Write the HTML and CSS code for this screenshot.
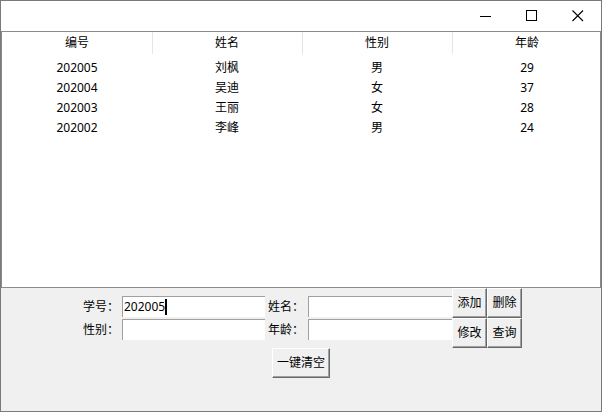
FILE: index.html
```html
<!DOCTYPE html>
<html>
<head>
<meta charset="utf-8">
<link rel="stylesheet" href="styles.css">
</head>
<body>
<div class="window">
  <div class="titlebar">
    <div class="tb-btn"><svg width="12" height="12" viewBox="0 0 12 12"><path d="M0 6.5H11" stroke="#000" stroke-width="1"/></svg></div>
    <div class="tb-btn"><svg width="12" height="12" viewBox="0 0 12 12"><rect x="0.5" y="0.5" width="10" height="10" fill="none" stroke="#000" stroke-width="1"/></svg></div>
    <div class="tb-btn"><svg width="12" height="12" viewBox="0 0 12 12"><path d="M0.5 0.5L11 11M11 0.5L0.5 11" stroke="#000" stroke-width="1.1"/></svg></div>
  </div>
  <div class="table">
    <div class="thead">
      <div class="th">编号</div>
      <div class="th sep">姓名</div>
      <div class="th sep">性别</div>
      <div class="th sep">年龄</div>
    </div>
    <div class="tr"><div>202005</div><div>刘枫</div><div>男</div><div>29</div></div>
    <div class="tr"><div>202004</div><div>吴迪</div><div>女</div><div>37</div></div>
    <div class="tr"><div>202003</div><div>王丽</div><div>女</div><div>28</div></div>
    <div class="tr"><div>202002</div><div>李峰</div><div>男</div><div>24</div></div>
  </div>
  <div class="panel">
    <div class="form-row">
      <div class="fields">
        <div class="label">学号：</div>
        <div class="input">202005<span class="caret"></span></div>
        <div class="label label2">姓名：</div>
        <div class="input"></div>
        <div class="label">性别：</div>
        <div class="input"></div>
        <div class="label label2">年龄：</div>
        <div class="input"></div>
      </div>
      <div class="buttons">
        <div class="btn">添加</div>
        <div class="btn">删除</div>
        <div class="btn">修改</div>
        <div class="btn">查询</div>
      </div>
    </div>
    <div class="clear-row"><div class="btn wide">一键清空</div></div>
  </div>
</div>
</body>
</html>
```
FILE: styles.css
```css
html, body {
  margin: 0;
  padding: 0;
  background: #ffffff;
}
body {
  font-family: "Noto Sans", "Noto Sans CJK SC", sans-serif;
  font-size: 12px;
  color: #000;
}
.window {
  width: 602px;
  height: 412px;
  box-sizing: border-box;
  border: 1px solid #7a7a7a;
  display: flex;
  flex-direction: column;
  overflow: hidden;
}
.titlebar {
  height: 30px;
  background: #fff;
  display: flex;
  justify-content: flex-end;
  flex: none;
}
.tb-btn {
  width: 46px;
  height: 30px;
  display: flex;
  align-items: center;
  justify-content: center;
}
.tb-btn svg { display: block; }
.table {
  height: 255px;
  flex: none;
  border: 1px solid #8a8a8a;
  background: #fff;
  overflow: hidden;
}
.thead {
  display: grid;
  grid-template-columns: repeat(4, 150px);
  height: 26px;
}
.th {
  line-height: 22px;
  text-align: center;
  position: relative;
}
.th.sep::before {
  content: "";
  position: absolute;
  left: 0;
  top: 0;
  width: 1px;
  height: 22px;
  background: #e5e5e5;
}
.tr {
  display: grid;
  grid-template-columns: repeat(4, 150px);
  height: 20px;
  line-height: 20px;
}
.tr div {
  text-align: center;
}
.panel {
  flex: 1;
  background: #f0f0f0;
  display: flex;
  flex-direction: column;
}
.form-row {
  display: flex;
  align-items: flex-start;
  margin-left: 82px;
}
.fields {
  margin-top: 8px;
  display: grid;
  grid-template-columns: 39px 143px 43px 144px;
  grid-auto-rows: 21px;
  row-gap: 2px;
}
.label {
  line-height: 21px;
  white-space: nowrap;
}
.label2 {
  padding-left: 3px;
}
.input {
  box-sizing: border-box;
  height: 21px;
  background: #fff;
  border-top: 1px solid #a0a0a0;
  border-left: 1px solid #a0a0a0;
  padding-left: 1px;
  line-height: 20px;
  font-size: 12px;
  display: flex;
  align-items: center;
}
.caret {
  display: inline-block;
  width: 2px;
  height: 16px;
  background: #000;
}
.buttons {
  display: grid;
  grid-template-columns: 35px 35px;
  grid-auto-rows: 30px;
}
.btn {
  box-sizing: border-box;
  border-top: 1px solid #fff;
  border-left: 1px solid #fff;
  border-right: 1px solid #696969;
  border-bottom: 1px solid #696969;
  box-shadow: inset -1px -1px 0 #a0a0a0;
  background: #f0f0f0;
  display: flex;
  align-items: center;
  justify-content: center;
  line-height: 1;
}
.clear-row {
  display: flex;
  justify-content: center;
}
.btn.wide {
  width: 58px;
  height: 30px;
}
```
